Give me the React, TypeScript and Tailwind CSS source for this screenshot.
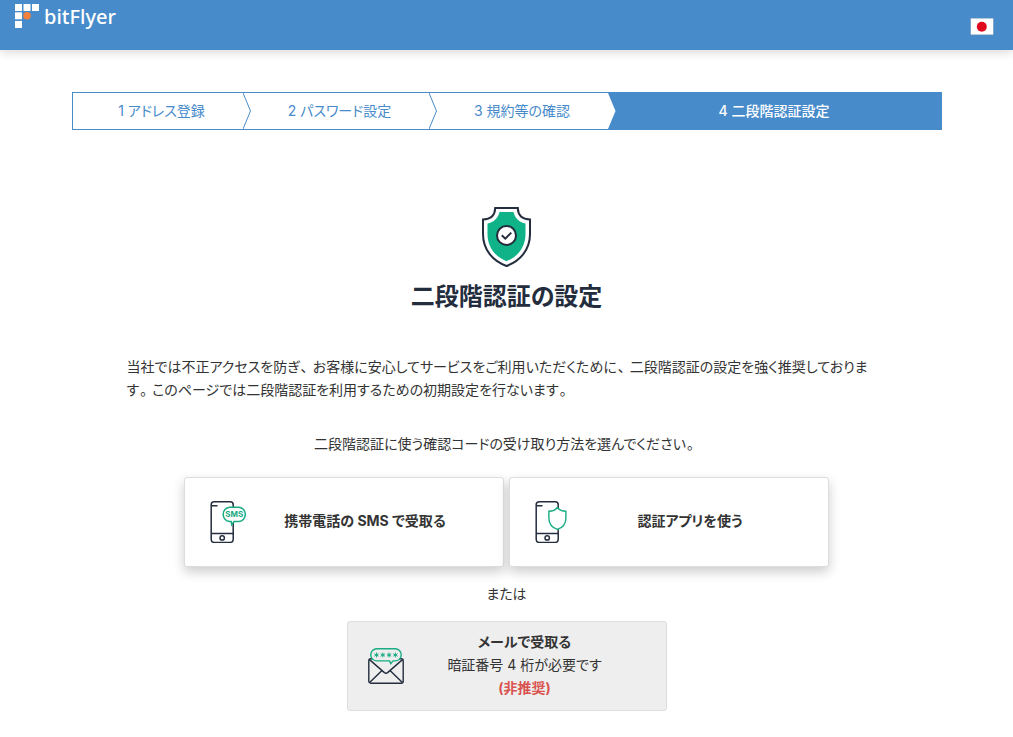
import type { ReactNode } from "react";
import clsx from "clsx";

const steps = [
  { label: "1 アドレス登録", size: "grow-[178]" },
  { label: "2 パスワード設定", size: "grow-[194] -ml-2" },
  { label: "3 規約等の確認", size: "grow-[187] -ml-2" },
  { label: "4 二段階認証設定", size: "grow-[333] -ml-2", current: true },
];

function Logo() {
  return (
    <a href="#" className="flex items-start gap-1 pt-1 text-white">
      <svg width="25" height="24" viewBox="0 0 25 24" fill="currentColor" aria-hidden="true">
        <rect x="0" y="0" width="7" height="7" />
        <rect x="8.5" y="0" width="7" height="7" />
        <rect x="17" y="0" width="7" height="7" />
        <rect x="0" y="8.3" width="7" height="7" />
        <rect x="0" y="17" width="7" height="7" />
        <circle cx="12" cy="11.8" r="3.8" fill="#f5813a" />
      </svg>
      <span className="font-['Noto_Sans',sans-serif] text-[20px] leading-[26px] font-medium">bitFlyer</span>
    </a>
  );
}

function Header() {
  return (
    <header className="flex h-[50px] justify-between bg-[#478bca] pr-[19px] pl-[15px] shadow-[0_2px_10px_rgba(0,0,0,0.16)]">
      <Logo />
      <button type="button" aria-label="日本語" className="mt-1 cursor-pointer self-center">
        <svg width="24" height="18" viewBox="0 0 24 18" aria-hidden="true">
          <rect x="0.4" y="0.2" width="23.2" height="17" fill="#6f93b5" />
          <rect x="0.8" y="0.5" width="22.4" height="16" fill="#fff" />
          <circle cx="11.8" cy="8.7" r="5" fill="#e00a1c" />
        </svg>
      </button>
    </header>
  );
}

function Steps() {
  return (
    <ol className="flex h-[38px] border border-[#478bca] text-[#478bca]">
      {steps.map((step, i) => (
        <li
          key={step.label}
          aria-current={step.current ? "step" : undefined}
          className={clsx("flex basis-0 items-center", step.size, step.current ? "bg-[#478bca] font-medium text-white" : "relative z-10")}
        >
          <span className={clsx("flex-1 pb-0.5 text-center", !step.current && "pl-2")}>{step.label}</span>
          {!step.current && (
            <svg className="h-full w-2" viewBox="0 0 8 36" preserveAspectRatio="none" aria-hidden="true">
              <path d="M0 0L7.5 18L0 36" fill="#fff" stroke={i === 2 ? "none" : "#478bca"} />
            </svg>
          )}
        </li>
      ))}
    </ol>
  );
}

function ShieldIcon() {
  return (
    <svg width="49" height="60" viewBox="0 0 49 60" className="mx-auto" aria-hidden="true">
      <path
        d="M13.2 1H35.8C36 8 40 12.3 48 12.4V27C48 43 38 54 24.5 59C11 54 1 43 1 27V12.4C9 12.3 13 8 13.2 1Z"
        fill="#fff"
        stroke="#232d3d"
        strokeWidth="2"
      />
      <path
        d="M17.5 5H31.5C33 11 37 15.3 43.5 16.5V27C43.5 40 36 49.5 24.5 54.2C13 49.5 5.5 40 5.5 27V16.5C12 15.3 16 11 17.5 5Z"
        fill="#0fb387"
      />
      <circle cx="24.5" cy="28.4" r="9.5" fill="#fff" stroke="#232d3d" strokeWidth="2" />
      <path d="M19.8 28.2L23.3 31.6L29.3 25.6" fill="none" stroke="#232d3d" strokeWidth="2" />
    </svg>
  );
}

function Phone() {
  return (
    <g fill="none" stroke="#232d3d" strokeWidth="1.5">
      <rect x="1.2" y="0.8" width="22" height="40.6" rx="3" />
      <path d="M1.2 32.5H23.2M2 4.7H7.5" />
      <circle cx="12.2" cy="36.9" r="2.2" />
    </g>
  );
}

function SmsIcon() {
  return (
    <svg width="37" height="42" viewBox="0 0 37 42" aria-hidden="true">
      <Phone />
      <path
        d="M19.5 6.2H29A7.2 7.2 0 0 1 29 20.5H24L21.8 23.8L21.2 20.5H19.5A7.2 7.2 0 0 1 19.5 6.2Z"
        fill="#fff"
        stroke="#19ab82"
        strokeWidth="1.5"
      />
      <text x="24.2" y="16.2" textAnchor="middle" fill="#19ab82" className="font-['Inter',sans-serif] text-[8px] font-bold">
        SMS
      </text>
    </svg>
  );
}

function AppIcon() {
  return (
    <svg width="32" height="42" viewBox="0 0 32 42" aria-hidden="true">
      <Phone />
      <path
        d="M22.4 6.5C20.6 9 17.5 10.2 13.9 10.2V17C13.9 23 17 26.6 22.4 28.4C27.8 26.6 30.9 23 30.9 17V10.2C27.3 10.2 24.2 9 22.4 6.5Z"
        fill="#fff"
        stroke="#19ab82"
        strokeWidth="1.4"
      />
    </svg>
  );
}

function MailIcon() {
  return (
    <svg width="36" height="36" viewBox="0 0 36 36" fill="none" aria-hidden="true">
      <g stroke="#232d3d" strokeWidth="1.4">
        <rect x="0.8" y="10.8" width="34.4" height="24.4" rx="2" />
        <path d="M1.2 11.4L16.4 24.6Q18 25.8 19.6 24.6L34.8 11.4M1.6 34.4L14 22.4M34.4 34.4L22 22.4" />
      </g>
      <path
        d="M8.8 0.8H27.2A6 6 0 0 1 27.2 12.9H25L22.8 15.6L21.6 12.9H8.8A6 6 0 0 1 8.8 0.8Z"
        fill="#eee"
        stroke="#19ab82"
        strokeWidth="1.4"
      />
      <path
        d="M8.5 4.6V9.4M6.4 5.8L10.6 8.2M10.6 5.8L6.4 8.2M14.8 4.6V9.4M12.7 5.8L16.9 8.2M16.9 5.8L12.7 8.2M21.1 4.6V9.4M19 5.8L23.2 8.2M23.2 5.8L19 8.2M27.4 4.6V9.4M25.3 5.8L29.5 8.2M29.5 5.8L25.3 8.2"
        stroke="#19ab82"
      />
    </svg>
  );
}

// Kana are set proportionally, so punctuation gets its space back as padding
function Prose({ className, text }: { className: string; text: string }) {
  return (
    <p className={className}>
      {text.split(/([、。])/).map((part, i) =>
        i % 2 ? (
          <span key={i} className="pr-[5px] pl-px">
            {part}
          </span>
        ) : (
          part
        ),
      )}
    </p>
  );
}

function MethodButton({ icon, children }: { icon: ReactNode; children: ReactNode }) {
  return (
    <button
      type="button"
      className="flex h-[90px] w-80 cursor-pointer items-center rounded-[3px] border border-[#ddd] bg-white px-[25px] font-bold shadow-[0_5px_12px_rgba(0,0,0,0.2)]"
    >
      <span className="w-[42px]">{icon}</span>
      <span className="flex-1 pb-1">{children}</span>
    </button>
  );
}

export default function App() {
  return (
    <div
      className="min-h-screen bg-white font-['Inter','Noto_Sans_CJK_JP',sans-serif] text-[14px] leading-[23px] text-[#333] [font-feature-settings:'palt']"
      lang="ja"
    >
      <Header />
      <main className="mx-auto mt-[42px] max-w-[870px] pb-6">
        <Steps />
        <section className="mx-auto mt-[77px] max-w-[760px]">
          <ShieldIcon />
          <h1 className="mt-3 text-center text-[24px] leading-9 font-bold text-[#232d3d]">二段階認証の設定</h1>
          <Prose
            className="mt-10 pr-2"
            text="当社では不正アクセスを防ぎ、お客様に安心してサービスをご利用いただくために、二段階認証の設定を強く推奨しております。このページでは二段階認証を利用するための初期設定を行ないます。"
          />
          <Prose className="mt-[31px] text-center" text="二段階認証に使う確認コードの受け取り方法を選んでください。" />
          <div className="mt-[22px] flex flex-wrap justify-center gap-[5px]">
            <MethodButton icon={<SmsIcon />}>携帯電話の SMS で受取る</MethodButton>
            <MethodButton icon={<AppIcon />}>認証アプリを使う</MethodButton>
          </div>
          <p className="mt-[15px] text-center">または</p>
          <button
            type="button"
            className="mx-auto mt-4 flex h-[90px] w-80 cursor-pointer items-center rounded-[3px] border border-[#ddd] bg-[#eee] px-5"
          >
            <MailIcon />
            <span className="flex-1 pb-1">
              <strong className="block font-bold">メールで受取る</strong>
              暗証番号 4 桁が必要です
              <strong className="block font-bold text-[#d9534f]">(非推奨)</strong>
            </span>
          </button>
        </section>
      </main>
    </div>
  );
}
